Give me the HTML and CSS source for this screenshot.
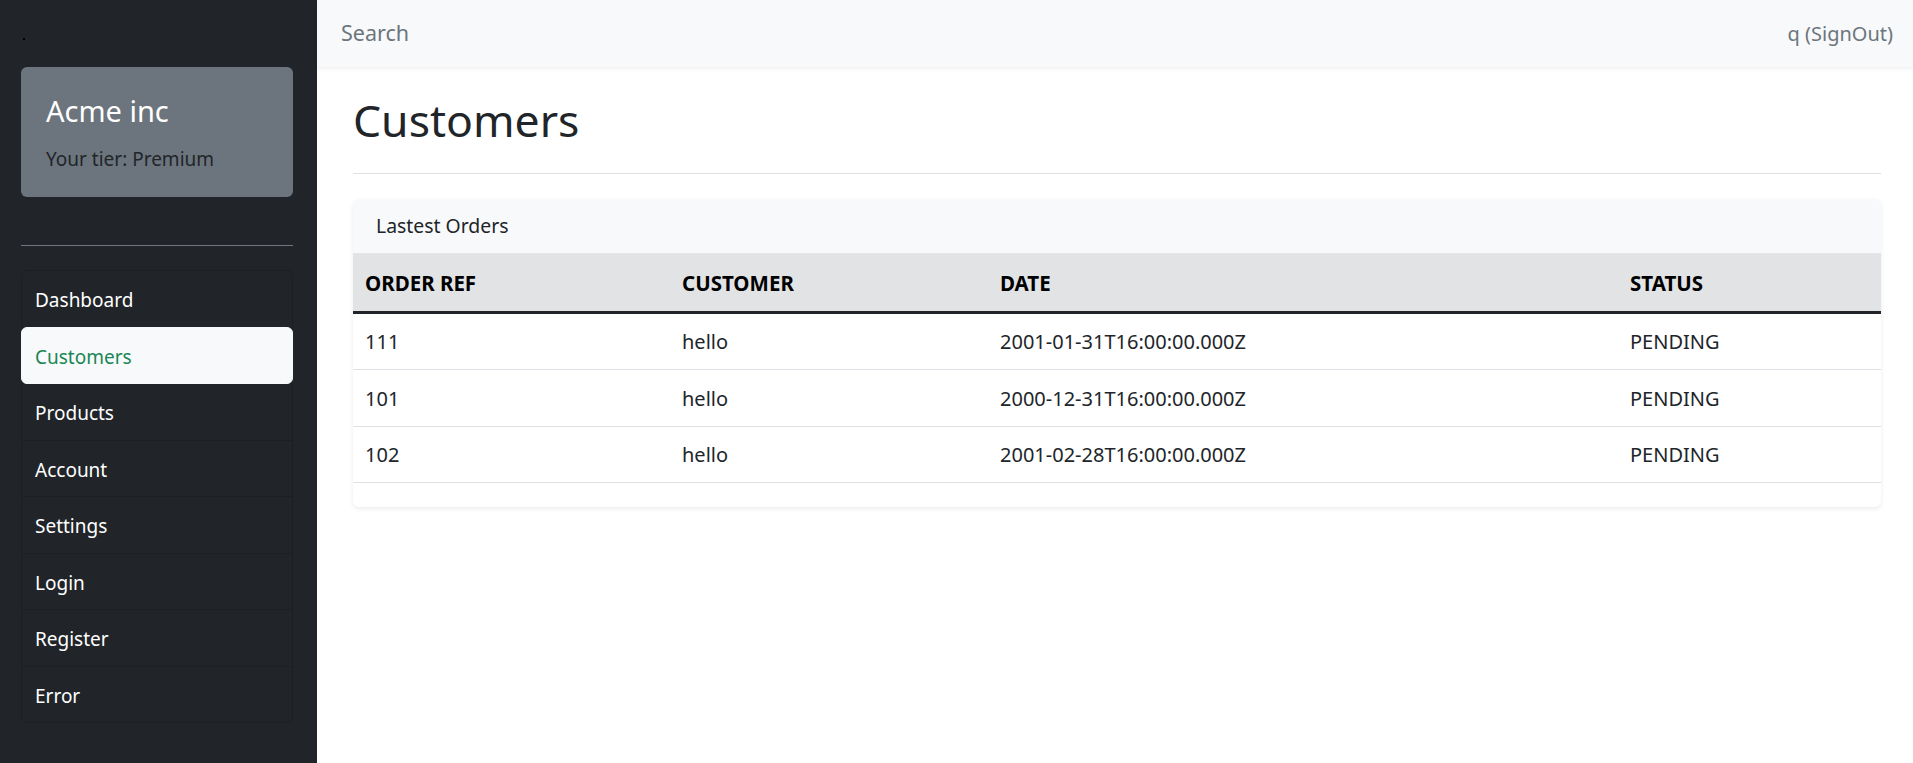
FILE: index.html
```html
<!DOCTYPE html>
<html lang="en">
<head>
<meta charset="utf-8">
<title>Customers</title>
<link rel="stylesheet" href="styles.css">
</head>
<body>
<div class="layout">
  <aside class="sidebar">
    <div class="brand"><span class="brand-dot"></span></div>
    <div class="tier-card">
      <h4 class="tier-name">Acme inc</h4>
      <p class="tier-level">Your tier: Premium</p>
    </div>
    <hr class="side-rule">
    <ul class="nav-list">
      <li class="nav-item">Dashboard</li>
      <li class="nav-item active">Customers</li>
      <li class="nav-item">Products</li>
      <li class="nav-item">Account</li>
      <li class="nav-item">Settings</li>
      <li class="nav-item">Login</li>
      <li class="nav-item">Register</li>
      <li class="nav-item">Error</li>
    </ul>
  </aside>
  <div class="main">
    <header class="topbar">
      <input class="search" type="text" placeholder="Search">
      <span class="user">q (SignOut)</span>
    </header>
    <section class="content">
      <h1 class="page-title">Customers</h1>
      <hr class="page-rule">
      <div class="card">
        <div class="card-header">Lastest Orders</div>
        <table class="orders">
          <thead>
            <tr>
              <th class="c1">ORDER REF</th>
              <th class="c2">CUSTOMER</th>
              <th class="c3">DATE</th>
              <th class="c4">STATUS</th>
            </tr>
          </thead>
          <tbody>
            <tr><td>111</td><td>hello</td><td>2001-01-31T16:00:00.000Z</td><td>PENDING</td></tr>
            <tr><td>101</td><td>hello</td><td>2000-12-31T16:00:00.000Z</td><td>PENDING</td></tr>
            <tr><td>102</td><td>hello</td><td>2001-02-28T16:00:00.000Z</td><td>PENDING</td></tr>
          </tbody>
        </table>
      </div>
    </section>
  </div>
</div>
</body>
</html>
```

FILE: styles.css
```css
* { box-sizing: border-box; }
html, body { margin: 0; padding: 0; }
body {
  font-family: "Segoe UI", "Noto Sans", "Open Sans", sans-serif;
  font-size: 20px;
  line-height: 1.5;
  color: #212529;
  background: #fff;
}
.layout { display: flex; min-height: 100vh; }

.sidebar {
  width: 317px;
  flex: 0 0 317px;
  background: #212529;
  padding: 0 24px 0 21px;
}
.brand { height: 67px; padding: 38px 0 0 2px; }
.brand-dot { display: block; width: 2px; height: 2px; background: #000; }

.tier-card {
  background: #6c757d;
  border-radius: 6px;
  height: 130px;
  padding: 27px 25px 20px;
}
.tier-name {
  margin: 0 0 15px;
  font-size: 29px;
  font-weight: 400;
  line-height: 1.2;
  color: #fff;
}
.tier-level { margin: 0; font-size: 19px; line-height: 30px; color: #212529; }

.side-rule {
  margin: 48px 0 24px;
  border: 0;
  border-top: 1px solid #6f757b;
  height: 0;
}
.nav-list {
  list-style: none;
  margin: 0;
  padding: 0;
}
.nav-item {
  padding: 14px 13px 11.5px;
  line-height: 30px;
  font-size: 19px;
  color: #fff;
  border: 1px solid #1c1f23;
  margin-top: -1px;
}
.nav-item:first-child { margin-top: 0; border-radius: 6px 6px 0 0; }
.nav-item:last-child { border-radius: 0 0 6px 6px; }
.nav-item.active {
  position: relative;
  background: #f8f9fa;
  color: #198754;
  border-radius: 6px;
  border-color: #f8f9fa;
}

.main { flex: 1; display: flex; flex-direction: column; min-width: 0; }
.topbar {
  height: 67px;
  background: #f8f9fa;
  box-shadow: 0 2px 4px rgba(0,0,0,.06);
  display: flex;
  align-items: center;
  justify-content: space-between;
  padding: 0 20px 0 24px;
  position: relative;
}
.search {
  border: 0;
  background: transparent;
  font: inherit;
  font-size: 21.5px;
  color: #212529;
  padding: 0;
  outline: none;
  width: 400px;
}
.search::placeholder { color: #6c757d; }
.user { color: #6c757d; font-size: 20px; }

.content { padding: 23px 32px 0 36px; }
.page-title {
  margin: 0;
  font-size: 44.5px;
  font-weight: 400;
  line-height: 60px;
  color: #212529;
}
.page-rule {
  margin: 23px 0 25px;
  border: 0;
  border-top: 1px solid #dfe1e3;
  height: 0;
}
.card {
  border-radius: 6px;
  box-shadow: 0 2px 5px rgba(0,0,0,.08);
  background: #fff;
  overflow: hidden;
  padding-bottom: 24px;
}
.card-header {
  background: #f8f9fa;
  padding: 12px 23px;
  line-height: 30px;
  font-size: 19.4px;
  border-bottom: 1px solid #e3e5e7;
}
.orders {
  width: 100%;
  border-collapse: collapse;
  font-size: 20px;
}
.orders th, .orders td {
  text-align: left;
  padding: 13px 12px;
  line-height: 30px;
}
.orders th {
  background: #e2e3e5;
  color: #000;
  font-weight: 700;
  font-size: 20.5px;
  padding-top: 14px;
  padding-bottom: 12.5px;
}
.orders thead tr { border-bottom: 3px solid #212529; }
.orders tbody tr { border-bottom: 1px solid #dee2e6; }
.orders td { color: #212529; padding-top: 13.5px; padding-bottom: 12px; }
.c1 { width: 317px; }
.c2 { width: 318px; }
.c3 { width: 630px; }
```
